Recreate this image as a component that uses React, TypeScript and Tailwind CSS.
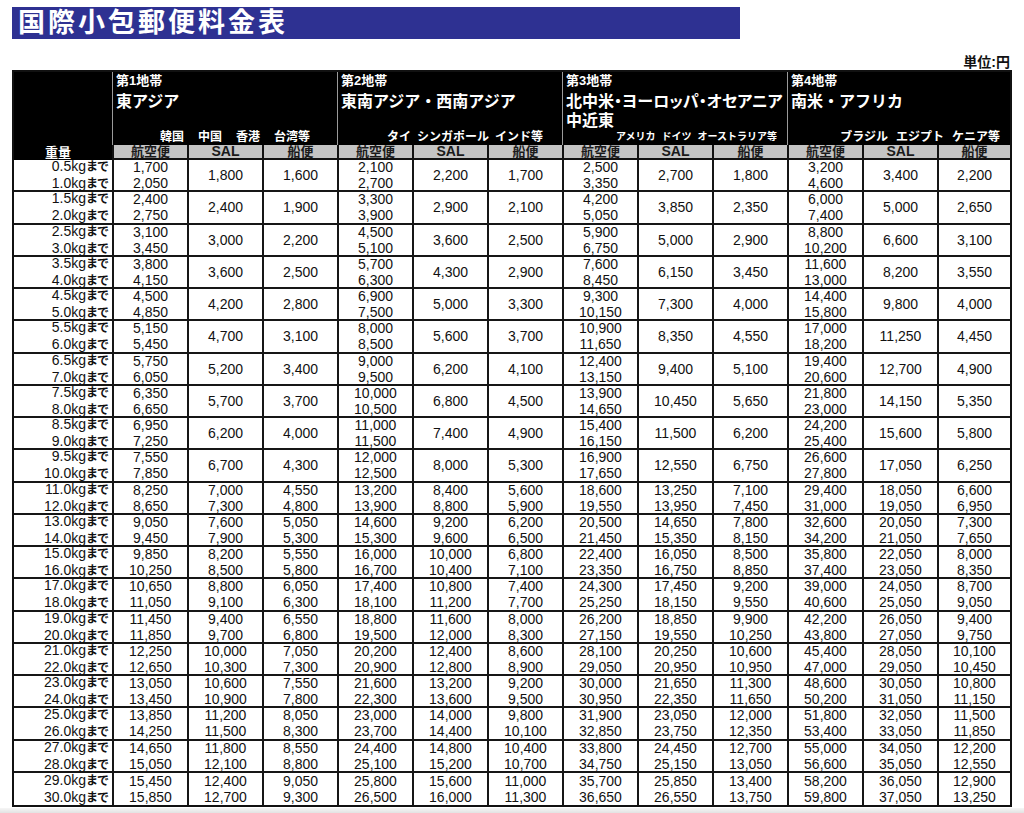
import React from 'react';

const fmt = (n: number) => n.toLocaleString('en-US');

// "a/b" means two values in one cell (11kg and up), a single value spans both lines
const parse = (s: string) => s.split(' ').map((t) => t.split('/').map((x) => fmt(Number(x))));
const pairs = (s: string) => {
  const v = s.split(' ').map(Number);
  const out: string[][] = [];
  for (let i = 0; i < v.length; i += 2) out.push([fmt(v[i]), fmt(v[i + 1])]);
  return out;
};

const zones = [
  {
    no: 1,
    name: ['東アジア'],
    countries: ['韓国', '中国', '香港', '台湾等'],
    countryClass: 'pr-[27px] gap-[14px] text-[12px]',
    air: pairs('1700 2050 2400 2750 3100 3450 3800 4150 4500 4850 5150 5450 5750 6050 6350 6650 6950 7250 7550 7850 8250 8650 9050 9450 9850 10250 10650 11050 11450 11850 12250 12650 13050 13450 13850 14250 14650 15050 15450 15850'),
    sal: parse('1800 2400 3000 3600 4200 4700 5200 5700 6200 6700 7000/7300 7600/7900 8200/8500 8800/9100 9400/9700 10000/10300 10600/10900 11200/11500 11800/12100 12400/12700'),
    ship: parse('1600 1900 2200 2500 2800 3100 3400 3700 4000 4300 4550/4800 5050/5300 5550/5800 6050/6300 6550/6800 7050/7300 7550/7800 8050/8300 8550/8800 9050/9300'),
  },
  {
    no: 2,
    name: ['東南アジア・西南アジア'],
    countries: ['タイ', 'シンガポール', 'インド等'],
    countryClass: 'pr-[19px] gap-[6px] text-[12px]',
    air: pairs('2100 2700 3300 3900 4500 5100 5700 6300 6900 7500 8000 8500 9000 9500 10000 10500 11000 11500 12000 12500 13200 13900 14600 15300 16000 16700 17400 18100 18800 19500 20200 20900 21600 22300 23000 23700 24400 25100 25800 26500'),
    sal: parse('2200 2900 3600 4300 5000 5600 6200 6800 7400 8000 8400/8800 9200/9600 10000/10400 10800/11200 11600/12000 12400/12800 13200/13600 14000/14400 14800/15200 15600/16000'),
    ship: parse('1700 2100 2500 2900 3300 3700 4100 4500 4900 5300 5600/5900 6200/6500 6800/7100 7400/7700 8000/8300 8600/8900 9200/9500 9800/10100 10400/10700 11000/11300'),
  },
  {
    no: 3,
    name: ['北中米・ヨーロッパ・オセアニア', '中近東'],
    countries: ['アメリカ', 'ドイツ', 'オーストラリア等'],
    countryClass: 'pr-[10px] gap-[6px] text-[10px]',
    air: pairs('2500 3350 4200 5050 5900 6750 7600 8450 9300 10150 10900 11650 12400 13150 13900 14650 15400 16150 16900 17650 18600 19550 20500 21450 22400 23350 24300 25250 26200 27150 28100 29050 30000 30950 31900 32850 33800 34750 35700 36650'),
    sal: parse('2700 3850 5000 6150 7300 8350 9400 10450 11500 12550 13250/13950 14650/15350 16050/16750 17450/18150 18850/19550 20250/20950 21650/22350 23050/23750 24450/25150 25850/26550'),
    ship: parse('1800 2350 2900 3450 4000 4550 5100 5650 6200 6750 7100/7450 7800/8150 8500/8850 9200/9550 9900/10250 10600/10950 11300/11650 12000/12350 12700/13050 13400/13750'),
  },
  {
    no: 4,
    name: ['南米・アフリカ'],
    countries: ['ブラジル', 'エジプト', 'ケニア等'],
    countryClass: 'pr-[10px] gap-[8px] text-[12px]',
    air: pairs('3200 4600 6000 7400 8800 10200 11600 13000 14400 15800 17000 18200 19400 20600 21800 23000 24200 25400 26600 27800 29400 31000 32600 34200 35800 37400 39000 40600 42200 43800 45400 47000 48600 50200 51800 53400 55000 56600 58200 59800'),
    sal: parse('3400 5000 6600 8200 9800 11250 12700 14150 15600 17050 18050/19050 20050/21050 22050/23050 24050/25050 26050/27050 28050/29050 30050/31050 32050/33050 34050/35050 36050/37050'),
    ship: parse('2200 2650 3100 3550 4000 4450 4900 5350 5800 6250 6600/6950 7300/7650 8000/8350 8700/9050 9400/9750 10100/10450 10800/11150 11500/11850 12200/12550 12900/13250'),
  },
];

const weights = Array.from({ length: 20 }, (_, i) => {
  if (i < 10) return [(i + 0.5).toFixed(1), (i + 1).toFixed(1)];
  const a = 11 + (i - 10) * 2;
  return [a.toFixed(1), (a + 1).toFixed(1)];
});

const Cell: React.FC<{ values: string[]; last?: boolean }> = ({ values, last }) => (
  <div
    className={`${last ? 'w-[73px]' : 'w-[75px]'} shrink-0 border-l-2 border-[#161616] flex flex-col items-center justify-center leading-[16px]`}
  >
    {values.map((v, i) => (
      <span key={i}>{v}</span>
    ))}
  </div>
);

export default function App() {
  return (
    <div className="w-[1024px] h-[813px] overflow-hidden bg-white flex flex-col font-['Liberation_Sans','Noto_Sans_CJK_JP',sans-serif] text-[#111]">
      {/* Title */}
      <div className="mt-[7px] ml-[12px] w-[728px] h-[32px] bg-[#2e3192] pl-[6px] text-white font-bold text-[27px] leading-[32px] tracking-[3px]">
        国際小包郵便料金表
      </div>
      <div className="h-[31px] flex items-end justify-end pr-[14px] font-bold text-[14px] leading-[16px]">
        単位:円
      </div>

      {/* Table */}
      <div className="ml-[12px] w-[1000px] border-2 border-[#111] text-[14px]">
        <div className="flex">
          <div className="w-[98px] h-[88px] shrink-0 bg-black flex items-end justify-center pr-[10px] text-white font-bold text-[13px] leading-[15px]">
            重量
          </div>
          {zones.map((z, zi) => (
            <div key={z.no} className={zi === 3 ? 'w-[223px] shrink-0' : 'w-[225px] shrink-0'}>
              <div className="h-[73px] bg-black border-l border-[#9a9a9a] pl-[3px] flex flex-col text-white font-bold whitespace-nowrap">
                <div className="text-[13px] leading-[16px] pt-[1px]">第{z.no}地帯</div>
                <div className="mt-[3px]">
                  {z.name.map((n) => (
                    <div
                      key={n}
                      className={`text-[16px] leading-[19px] ${zi === 2 ? '[font-feature-settings:"palt"]' : ''}`}
                    >
                      {n}
                    </div>
                  ))}
                </div>
                <div className={`mt-auto flex justify-end leading-[14px] pb-[1px] ${z.countryClass}`}>
                  {z.countries.map((c) => (
                    <span key={c}>{c}</span>
                  ))}
                </div>
              </div>
              <div className="flex h-[15px] bg-[#c4c4c4] border-b-2 border-[#111] font-bold text-[#1a1a1a]">
                {['航空便', 'SAL', '船便'].map((t, ci) => (
                  <div
                    key={t}
                    className={`${zi === 3 && ci === 2 ? 'w-[73px]' : 'w-[75px]'} shrink-0 border-l-2 border-[#111] flex items-center justify-center ${ci === 1 ? 'text-[14px]' : 'text-[13px]'} leading-[13px]`}
                  >
                    {t}
                  </div>
                ))}
              </div>
            </div>
          ))}
        </div>

        <div>
          {weights.map((w, ri) => (
            <div key={ri} className="flex h-[32.25px] border-b-2 border-[#161616] last:border-b-0">
              <div className="w-[98px] shrink-0 flex flex-col items-end justify-center pr-[4px] leading-[16px]">
                {w.map((kg) => (
                  <span key={kg}>
                    {kg}kg
                    <span className="font-bold text-[12px] tracking-[-1px]">まで</span>
                  </span>
                ))}
              </div>
              {zones.map((z, zi) => (
                <React.Fragment key={z.no}>
                  <Cell values={z.air[ri]} />
                  <Cell values={z.sal[ri]} />
                  <Cell values={z.ship[ri]} last={zi === 3} />
                </React.Fragment>
              ))}
            </div>
          ))}
        </div>
      </div>

      <div className="flex-1 mt-[1px] bg-linear-to-b from-[#f6f6f6] to-[#e2e2e2]" />
    </div>
  );
}
